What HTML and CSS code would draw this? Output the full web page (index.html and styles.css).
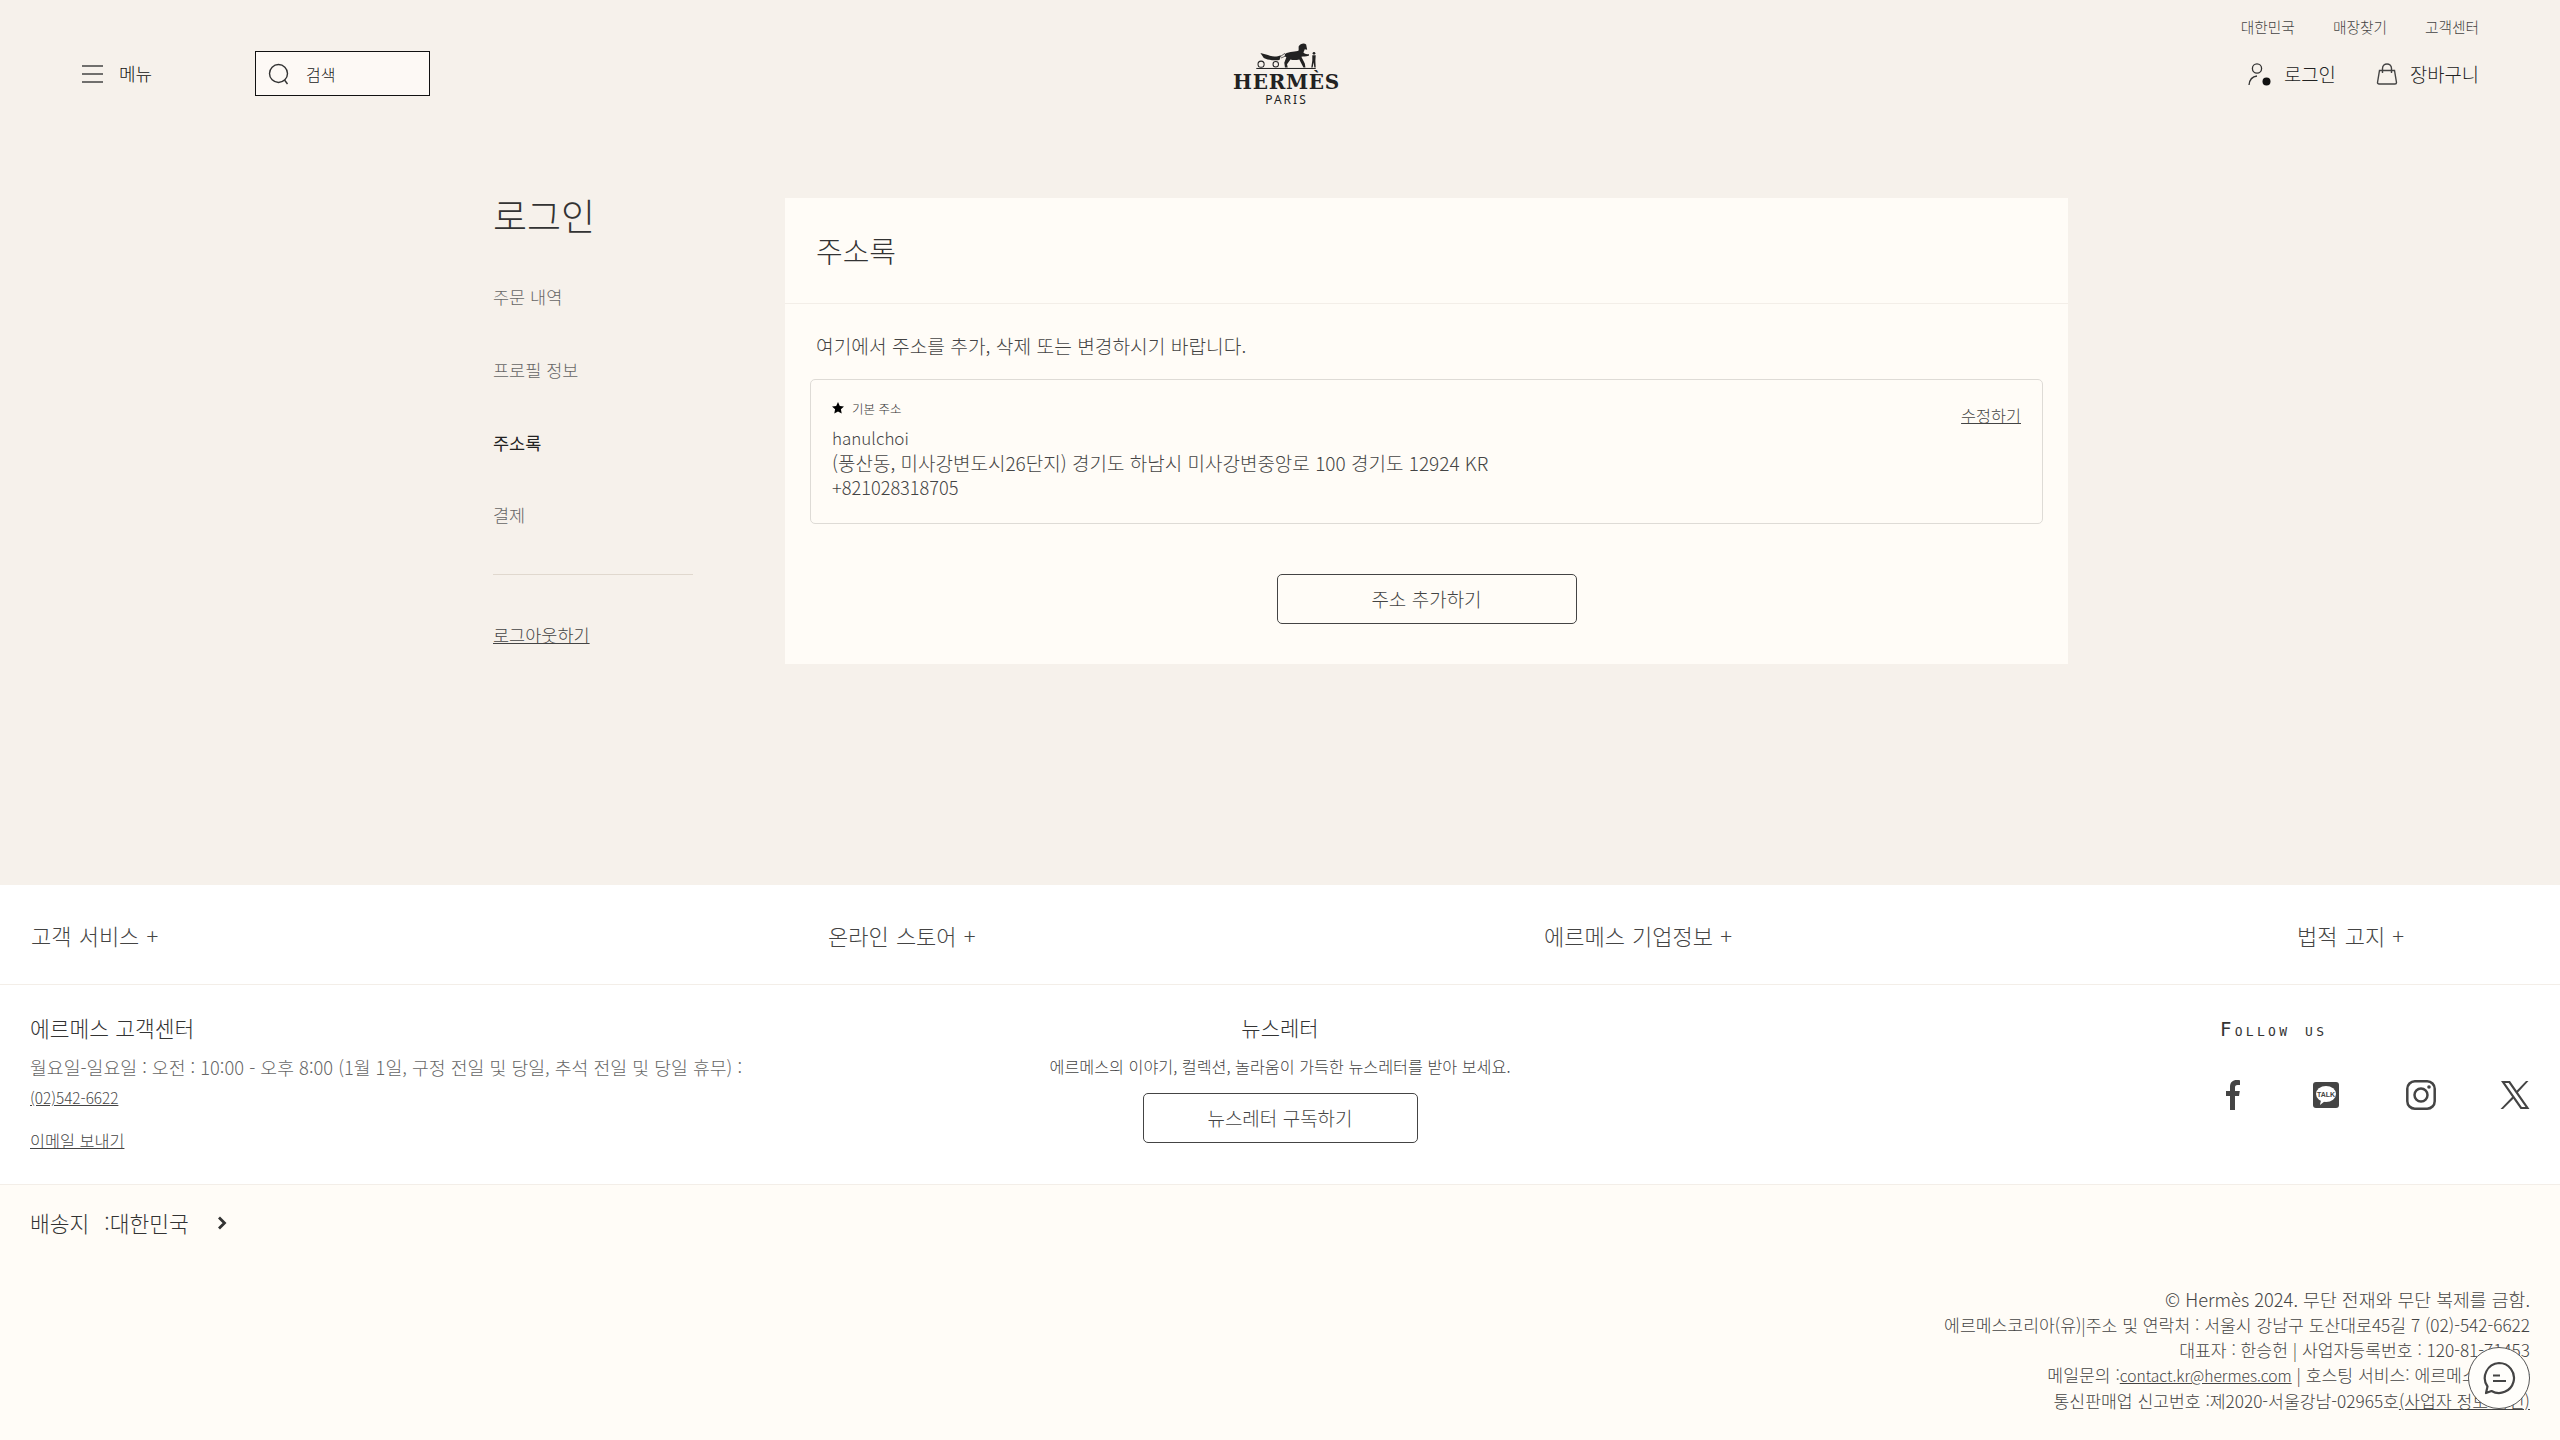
FILE: index.html
```html
<!DOCTYPE html>
<html lang="ko">
<head>
  <meta charset="UTF-8" />
  <title>주소록 | Hermès</title>
  <link rel="stylesheet" href="styles.css">
</head>
<body>
  <header class="site-header">
    <div class="header-left">
      <a class="menu-btn" href="#">
        <svg class="icon-menu" viewBox="0 0 21 18" width="21" height="18"><path d="M0 1h21M0 9h21M0 17h21" fill="none" stroke="#444" stroke-width="1.5"/></svg>
        <span>메뉴</span>
      </a>
      <div class="search-box">
        <svg viewBox="0 0 22 22" width="22" height="22"><circle cx="10.5" cy="10.5" r="9" fill="none" stroke="#333" stroke-width="1.4"/><path d="M16.5 17l3 4" fill="none" stroke="#333" stroke-width="1.4"/></svg>
        <span>검색</span>
      </div>
    </div>
    <a class="logo" href="#">
      <svg viewBox="225 65 180 82" width="62" height="28">
        <rect x="228" y="141" width="174" height="3" fill="#222"/>
        <path d="M312 100C325 92 345 95 352 90L352 78C356 70 368 66 374 72L377 88L370 86L366 96C370 100 376 102 382 100L382 105C372 108 366 106 360 108L370 128L372 140L366 140L354 116C345 118 335 118 328 116L318 130L320 140L312 140L310 126L316 110C312 108 310 104 312 100Z" fill="#222"/>
        <path d="M240 97L262 103C275 110 290 108 300 104L296 118C280 120 262 118 250 112Z" fill="#222"/>
        <path d="M298 108L312 98M300 112L314 106" stroke="#222" stroke-width="2" fill="none"/>
        <circle cx="242" cy="130" r="9" fill="none" stroke="#222" stroke-width="3"/>
        <circle cx="285" cy="130" r="8" fill="none" stroke="#222" stroke-width="3"/>
        <circle cx="397" cy="98" r="4" fill="#222"/>
        <path d="M392 104h10l-1 16l1 20h-4l-2-16l-3 16h-4l3-20Z" fill="#222"/>
      </svg>
      <span class="logo-name">HERMÈS</span>
      <span class="logo-city">PARIS</span>
    </a>
    <div class="header-right">
      <nav class="top-links">
        <a href="#">대한민국</a>
        <a href="#">매장찾기</a>
        <a href="#">고객센터</a>
      </nav>
      <div class="user-links">
        <a href="#">
          <svg viewBox="0 0 24 24" width="24" height="24"><circle cx="9" cy="6.5" r="4.6" fill="none" stroke="#333" stroke-width="1.3"/><path d="M1 23C1.500 18 4 14.500 9 14" fill="none" stroke="#333" stroke-width="1.3"/><circle cx="18.500" cy="19.500" r="4" fill="#111"/></svg>
          <span>로그인</span>
        </a>
        <a href="#">
          <svg viewBox="0 0 22 22" width="22" height="22"><path d="M3.500 7.500H18.500L20.500 19.500Q20.500 21 19 21H3Q1.500 21 1.500 19.500Z" fill="none" stroke="#444" stroke-width="1.400"/><path d="M6.500 10V5.500C6.500 -0.500 15.500 -0.500 15.500 5.500V10" fill="none" stroke="#444" stroke-width="1.400"/></svg>
          <span>장바구니</span>
        </a>
      </div>
    </div>
  </header>

  <main class="account">
    <aside class="side-nav">
      <h2>로그인</h2>
      <ul>
        <li><a href="#">주문 내역</a></li>
        <li><a href="#">프로필 정보</a></li>
        <li><a class="active" href="#">주소록</a></li>
        <li><a href="#">결제</a></li>
      </ul>
      <a class="logout" href="#">로그아웃하기</a>
    </aside>
    <section class="panel">
      <h1>주소록</h1>
      <div class="panel-body">
        <p class="intro">여기에서 주소를 추가, 삭제 또는 변경하시기 바랍니다.</p>
        <div class="address-card">
          <div class="address-info">
            <div class="default-tag">
              <svg viewBox="0 0 12 12" width="12" height="12"><path d="M6 0l1.800 3.900 4.200.500-3.100 2.900.800 4.200L6 9.400 2.300 11.500l.8-4.200L0 4.400l4.200-.5z" fill="#000"/></svg>
              <span>기본 주소</span>
            </div>
            <div class="address-lines">
              <p class="addr-name">hanulchoi</p>
              <p class="addr-street">(풍산동, 미사강변도시26단지) 경기도 하남시 미사강변중앙로 100 경기도 12924 KR</p>
              <p class="addr-phone">+821028318705</p>
            </div>
          </div>
          <a class="edit-link" href="#">수정하기</a>
        </div>
        <a class="btn btn-add" href="#">주소 추가하기</a>
      </div>
    </section>
  </main>

  <footer class="site-footer">
    <div class="footer-links">
      <a href="#">고객 서비스 +</a>
      <a href="#">온라인 스토어 +</a>
      <a href="#">에르메스 기업정보 +</a>
      <a href="#">법적 고지 +</a>
    </div>
    <div class="footer-info">
      <div class="service">
        <h4>에르메스 고객센터</h4>
        <p class="hours">월요일-일요일 : 오전 : 10:00 - 오후 8:00 (1월 1일, 구정 전일 및 당일, 추석 전일 및 당일 휴무) :</p>
        <a class="phone" href="#">(02)542-6622</a>
        <a class="mail" href="#">이메일 보내기</a>
      </div>
      <div class="newsletter">
        <h4>뉴스레터</h4>
        <p>에르메스의 이야기, 컬렉션, 놀라움이 가득한 뉴스레터를 받아 보세요.</p>
        <a class="btn btn-news" href="#">뉴스레터 구독하기</a>
      </div>
      <div class="follow">
        <h5>Follow us</h5>
        <div class="social">
          <svg viewBox="0 0 14 30" width="14" height="30"><path d="M4 30V16H0V11H4V7C4 2 7 0 10.500 0C12 0 13.500 .2 14 .3V5H11.500C9.500 5 9 6 9 7.500V11H13.800L13 16H9V30Z" fill="#444"/></svg>
          <svg viewBox="0 0 26 26" width="26" height="26"><rect width="26" height="26" rx="3" fill="#444"/><ellipse cx="13" cy="12" rx="10" ry="8" fill="#fff"/><path d="M8 18l-1 5 5-4z" fill="#fff"/><text x="13" y="14.500" text-anchor="middle" class="talk">TALK</text></svg>
          <svg viewBox="0 0 30 30" width="30" height="30"><rect x="1.300" y="1.300" width="27.400" height="27.400" rx="7.500" fill="none" stroke="#444" stroke-width="2.500"/><circle cx="15" cy="15" r="6.500" fill="none" stroke="#444" stroke-width="2.500"/><circle cx="23" cy="7" r="1.800" fill="#444"/></svg>
          <svg viewBox="0 0 30 28" width="30" height="28"><path d="M1 0H10L29.500 28H20.500ZM5 2L21.800 26H25.500L8.700 2Z" fill="#444" fill-rule="evenodd"/><path d="M26 0H28.500L17 12.500L15.700 10.800ZM12.500 15.500L13.800 17.300L3 28H.5Z" fill="#444"/></svg>
        </div>
      </div>
    </div>
    <div class="footer-bottom">
      <a class="ship-to" href="#">
        <span>배송지 :대한민국</span>
        <svg viewBox="0 0 10 16" width="10" height="16"><path d="M2 2.500l5.500 5.500-5.500 5.500" fill="none" stroke="#333" stroke-width="2.800"/></svg>
      </a>
      <div class="legal">
        <p class="legal-first">© Hermès 2024. 무단 전재와 무단 복제를 금함.</p>
        <p>에르메스코리아(유)|주소 및 연락처 : 서울시 강남구 도산대로45길 7 (02)-542-6622</p>
        <p>대표자 : 한승헌 | 사업자등록번호 : 120-81-71453</p>
        <p>메일문의 :<a class="legal-mail" href="#">contact.kr@hermes.com</a> | 호스팅 서비스: 에르메스 코리아</p>
        <p>통신판매업 신고번호 :제2020-서울강남-02965호<a href="#">(사업자 정보 확인)</a></p>
      </div>
    </div>
  </footer>

  <button class="chat-btn" type="button" aria-label="chat">
    <svg viewBox="0 0 34 34" width="34" height="34"><path d="M17 2A15 15 0 1 1 9.500 30L4 32L5.500 25.500A15 15 0 0 1 17 2Z" fill="none" stroke="#444" stroke-width="2.200" stroke-linejoin="round"/><path d="M11 14.500H18M11 20H24" fill="none" stroke="#444" stroke-width="2.200"/></svg>
  </button>
</body>
</html>
```

FILE: styles.css
```css
* {
  box-sizing: border-box;
}
body {
  margin: 0;
  font-family: "Noto Sans CJK KR", "Noto Sans", sans-serif;
  font-weight: 300;
  background: #f6f1eb;
  color: #444;
}
a {
  color: inherit;
  text-decoration: none;
}
h1, h2, h4, h5, p, ul {
  margin: 0;
  padding: 0;
  font-weight: 300;
}
ul {
  list-style: none;
}

.site-header {
  display: grid;
  grid-template-columns: 1fr auto 1fr;
  height: 190px;
  padding: 0 81px 0 82px;
}
.header-left {
  display: flex;
  align-items: center;
  height: 147px;
}
.menu-btn {
  display: flex;
  align-items: center;
  gap: 16px;
  width: 173px;
  font-size: 18px;
  color: #111;
}
.menu-btn span {
  margin-bottom: 2px;
}
.search-box {
  display: flex;
  align-items: center;
  gap: 16px;
  width: 175px;
  height: 45px;
  padding-left: 12px;
  background: #fdf9f5;
  border: 1px solid #111;
  font-size: 16px;
  color: #222;
}
.logo {
  display: flex;
  flex-direction: column;
  align-items: center;
  margin-left: 12px;
  padding-top: 42px;
  color: #222;
}
.logo-name {
  font-family: "DejaVu Serif", serif;
  font-weight: 700;
  font-size: 20px;
  line-height: 24px;
  letter-spacing: .7px;
}
.logo-city {
  font-family: "Noto Sans", sans-serif;
  font-weight: 400;
  font-size: 12px;
  line-height: 12px;
  letter-spacing: 2px;
}
.header-right {
  display: flex;
  flex-direction: column;
  align-items: flex-end;
}
.top-links {
  display: flex;
  gap: 38px;
  padding-top: 17px;
  font-size: 14.700px;
  line-height: 20px;
}
.user-links {
  display: flex;
  gap: 40px;
  margin-top: 23px;
  font-size: 18.800px;
  color: #222;
}
.user-links a {
  display: flex;
  align-items: center;
  gap: 12px;
}

.account {
  display: grid;
  grid-template-columns: 292px 1283px;
  height: 695px;
  padding-left: 493px;
}
.side-nav h2 {
  font-size: 37px;
  line-height: 50px;
  color: #333;
  margin-bottom: 43px;
}
.side-nav li {
  height: 72.800px;
  font-size: 17.500px;
  line-height: 28px;
  color: #666;
}
.side-nav li .active {
  color: #222;
  font-weight: 400;
}
.logout {
  display: block;
  width: 200px;
  padding-top: 48px;
  border-top: 1px solid #e0d8ce;
  font-size: 17.500px;
  line-height: 24px;
  text-decoration: underline;
}
.panel {
  height: 466px;
  margin-top: 8px;
  background: #fffcf7;
}
.panel h1 {
  height: 106px;
  padding: 30px 31px 0;
  font-size: 29px;
  line-height: 44px;
  color: #333;
  border-bottom: 1px solid #f3eee8;
}
.panel-body {
  display: flex;
  flex-direction: column;
  padding: 0 25px;
}
.intro {
  padding: 27px 6px 0;
  font-size: 19.200px;
  line-height: 30px;
}
.address-card {
  display: flex;
  justify-content: space-between;
  height: 145px;
  margin-top: 18px;
  padding: 18px 21px 0 21px;
  border: 1px solid #dedbd6;
  border-radius: 5px;
}
.default-tag {
  display: flex;
  align-items: center;
  gap: 8px;
  height: 20px;
  font-size: 12.500px;
  color: #333;
}
.address-lines {
  margin-top: 7px;
  line-height: 25px;
}
.addr-name {
  font-size: 17px;
}
.addr-street {
  font-size: 19px;
}
.addr-phone {
  font-size: 18.200px;
}
.edit-link {
  margin-top: 5px;
  font-size: 16.300px;
  line-height: 24px;
  text-decoration: underline;
}
.btn {
  display: flex;
  align-items: center;
  justify-content: center;
  padding-bottom: 2px;
  border: 1px solid #444;
  border-radius: 5px;
  font-size: 19px;
}
.btn-add {
  align-self: center;
  width: 300px;
  height: 50px;
  margin-top: 50px;
}

.site-footer {
  background: #fff;
}
.footer-links {
  display: grid;
  grid-template-columns: 797px 716px 753px auto;
  height: 100px;
  padding: 33px 31px 0;
  border-bottom: 1px solid #f3eee8;
  font-size: 22px;
  line-height: 34px;
  word-spacing: 1px;
}
.footer-info {
  display: grid;
  grid-template-columns: 1fr auto 1fr;
  height: 200px;
  padding: 0 30px;
  border-bottom: 1px solid #f3eee8;
}
.footer-info h4 {
  font-size: 21.500px;
  line-height: 30px;
  color: #333;
}
.service {
  padding-top: 28px;
}
.hours {
  margin-top: 9px;
  font-size: 18.300px;
  line-height: 30px;
  color: #666;
  white-space: nowrap;
}
.phone, .mail {
  display: block;
  width: fit-content;
  text-decoration: underline;
}
.phone {
  margin-top: 4px;
  font-size: 15.300px;
  line-height: 22px;
}
.mail {
  margin-top: 20px;
  font-size: 16.300px;
  line-height: 24px;
}
.newsletter {
  display: flex;
  flex-direction: column;
  align-items: center;
  padding-top: 27px;
}
.newsletter h4 {
  font-size: 21px;
}
.newsletter p {
  margin-top: 11px;
  font-size: 16.200px;
  line-height: 26px;
}
.btn-news {
  width: 275px;
  height: 50px;
  margin-top: 14px;
}
.follow {
  justify-self: end;
  width: 310px;
  padding-top: 32px;
}
.follow h5 {
  font-family: "DejaVu Sans Mono", monospace;
  font-variant: small-caps;
  font-size: 19px;
  line-height: 24px;
  letter-spacing: 3.300px;
  font-weight: 400;
  color: #333;
}
.social {
  display: grid;
  grid-template-columns: 87px 93px 94px 30px;
  align-items: center;
  height: 34px;
  margin-top: 37px;
  padding-left: 6px;
}
.talk {
  font-family: "Liberation Sans", sans-serif;
  font-size: 7px;
  font-weight: 700;
  fill: #444;
}

.footer-bottom {
  height: 255px;
  padding: 22px 30px 0;
  background: #fffcf7;
}
.ship-to {
  display: flex;
  align-items: center;
  gap: 28px;
  font-size: 21.500px;
  line-height: 32px;
  word-spacing: 9px;
  color: #333;
}
.legal {
  margin-top: 48px;
  text-align: right;
  font-size: 17.200px;
  line-height: 25px;
}
.legal-first {
  font-size: 18.300px;
}
.legal-mail {
  font-size: 15.600px;
}
.legal a {
  text-decoration: underline;
}

.chat-btn {
  position: fixed;
  right: 30px;
  bottom: 31px;
  display: flex;
  align-items: center;
  justify-content: center;
  width: 62px;
  height: 62px;
  padding: 0;
  background: #fffefb;
  border: 1px solid #555;
  border-radius: 50%;
}
```
